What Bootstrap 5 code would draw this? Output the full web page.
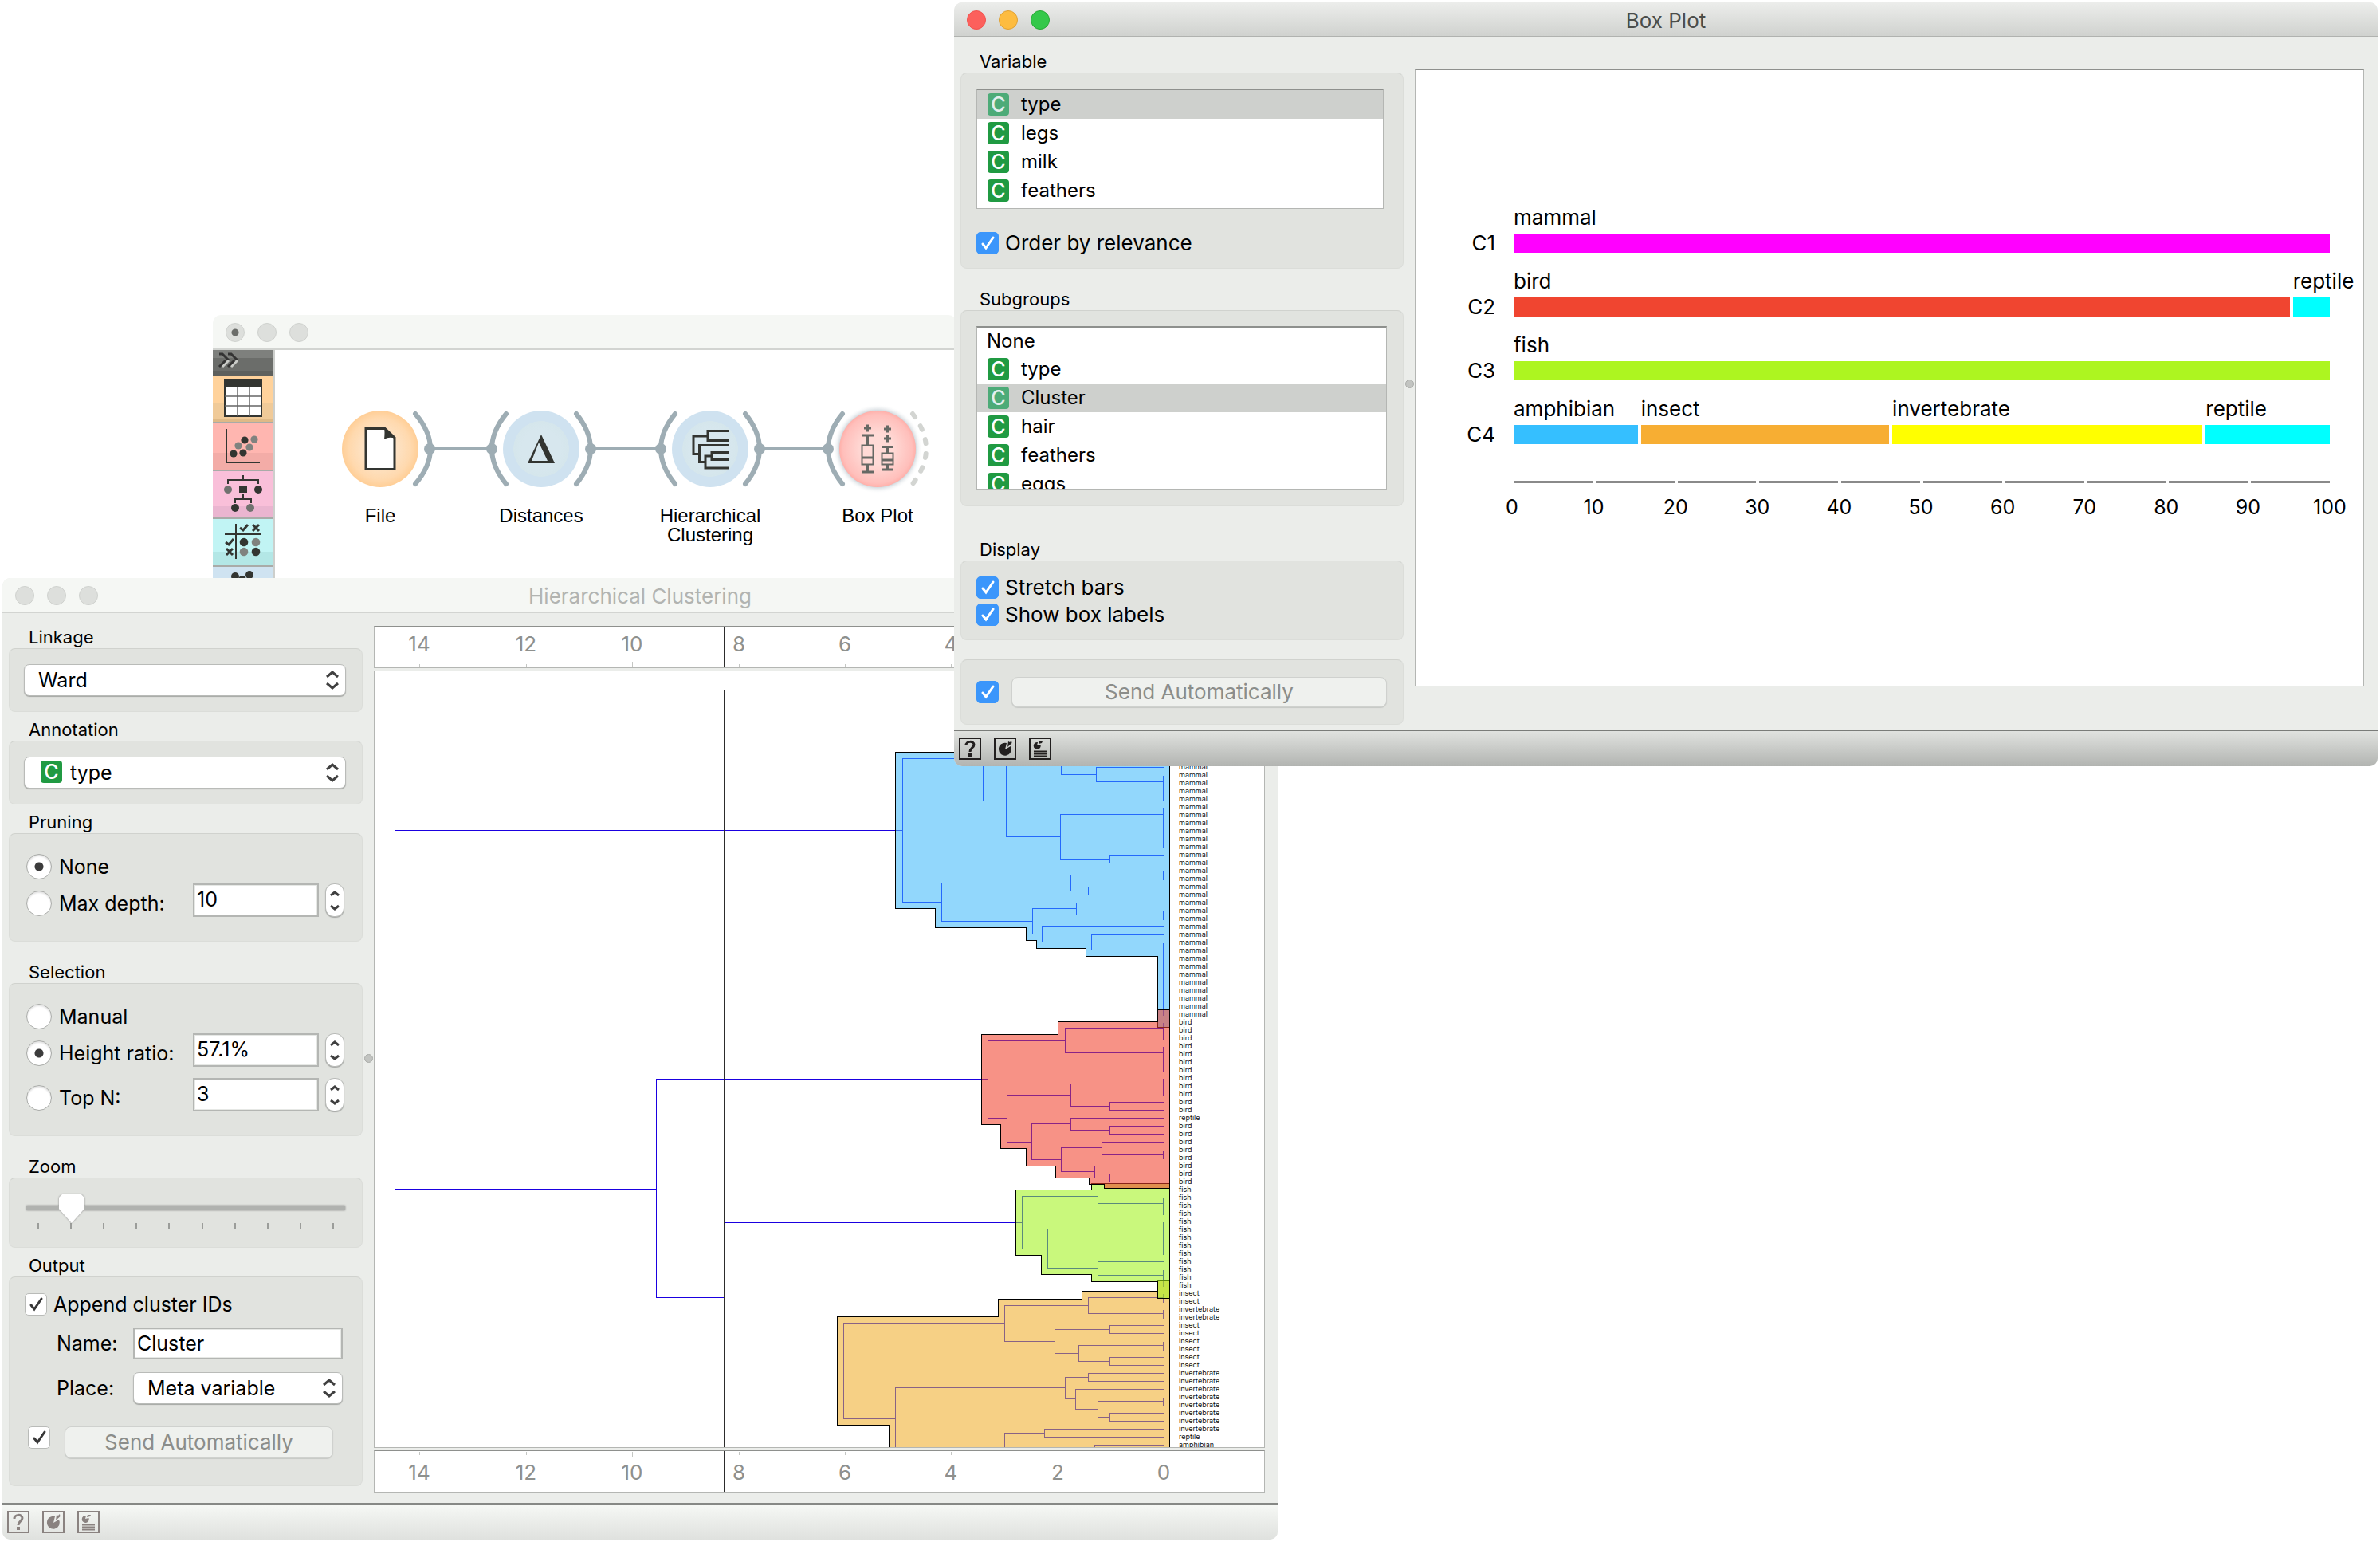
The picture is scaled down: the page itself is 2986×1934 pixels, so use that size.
<!DOCTYPE html>
<html lang="en">
<head>
<meta charset="utf-8">
<meta name="viewport" content="width=device-width, initial-scale=1">
<title>Orange – Box Plot</title>
<link rel="stylesheet" href="https://cdn.jsdelivr.net/npm/bootstrap@5.3.0/dist/css/bootstrap.min.css">
<style>
:root{--ink:#000;--win:#ebedea;--panel:#e1e3df;--edge:#b4b6b3}
body{font-family:Inter,"Noto Sans",sans-serif;font-size:26px;line-height:32px;color:var(--ink);background:#fff}
.desktop{min-height:100vh}
.win{position:absolute;background:var(--win);border-radius:10px;overflow:hidden}
.win-canvas{left:267px;right:1786px;top:395px;background:#fff}
.win-cluster{left:3px;right:1383px;top:725px}
.win-box{left:1197px;right:3px;top:3px}
.titlebar{height:44px;background:#f5f7f4;border-bottom:2px solid #d2d4d1;color:#b2b4b1;position:relative;padding-top:7px}
.win-box .titlebar{background:linear-gradient(#ecedeb,#d0d2cf);border-color:#b0b2af;color:#4b4d4a}
.lights{position:absolute;left:16px;top:10px;gap:16px}
.light{width:24px;height:24px;border-radius:50%;background:#dddfdc;border:1px solid #cfd1ce}
.light-dot{background:radial-gradient(circle,#6b6d6a 4px,#dddfdc 5px)}
.light-r{background:#fc605c;border-color:#f0524e}.light-y{background:#fdbc40;border-color:#dfa033}.light-g{background:#34c84a;border-color:#27a835}
.side{padding-left:8px}
.side-cluster{width:452px;font-size:25px}.side-box{width:564px;padding-bottom:6px}
.grip{width:14px}
.grip i{width:11px;height:11px;border-radius:50%;background:#c2c4c1;border:1px solid #aaaca9}
.legend-line{font-size:22px;line-height:28px;padding:8px 0 0 25px;margin:0}
.side-box .legend-line{padding-left:24px}
.grp{background:var(--panel);border:1px solid #dbddd9;border-top-color:#d0d2ce;border-radius:8px}
.bottombar{height:46px;border-top:2px solid #868885;background:linear-gradient(#f6f8f5,#dfe1de);padding:8px 6px;gap:16px;color:#8a8280}
.win-box .bottombar{border-color:#7a7c79;background:linear-gradient(#e0e2df,#b2b4b1);color:#221f1f}
.barbtn{width:28px;height:28px;padding:0;border:0;background:none;color:inherit;display:block}
.barbtn svg{display:block}
.pop{height:40px;border:1px solid #b9bbb8;border-radius:7px;background:#fff url("data:image/svg+xml,%3Csvg xmlns='http://www.w3.org/2000/svg' width='16' height='26'%3E%3Cpath d='M1 9 8 3l7 6M1 17l7 6 7-6' fill='none' stroke='%23404040' stroke-width='3'/%3E%3C/svg%3E") no-repeat right 8px center;font-size:25px;line-height:32px;padding:0 30px 0 17px;color:#000;box-shadow:0 1px 1px #a5a7a4;background-size:16px 26px}
.pop-icon{padding-left:57px}
.over-icon{position:absolute;left:21px;top:5px}
.cvar{width:27px;height:28px;border-radius:4px;background:#209a42;color:#fff;font-size:25px;font-weight:500;line-height:28px;text-align:center;flex:none}
.txt{height:42px;border:2px solid #b4b6b3;border-radius:0;background:#fff;box-shadow:inset 0 0 0 1px #e6e8e5;font-size:25px;line-height:32px;padding:0 3px 2px;color:#000}
.txt-num{width:158px}
.txt-name{height:40px;padding-bottom:0}
.steps{width:24px;height:42px;border:1px solid #b9bbb8;border-radius:11px;background:#fff;box-shadow:0 1px 1px #a5a7a4;overflow:hidden}
.steps button{border:0;background:none;padding:0;height:20px;width:22px;display:block;line-height:0}
.rad{appearance:none;width:32px;height:32px;border-radius:50%;border:1px solid #a9aba8;background:#fff;box-shadow:inset 0 2px 2px #e2e2e2;margin:0;flex:none}
.rad:checked{background:radial-gradient(circle,#3c3c3c 5px,#fff 6px)}
.chk{appearance:none;width:28px;height:28px;border:1px solid #b9bbb8;border-radius:5px;margin:0;flex:none;background:#fff url("data:image/svg+xml,%3Csvg xmlns='http://www.w3.org/2000/svg' width='26' height='26'%3E%3Cpath d='M7 14l4 5 9-13' fill='none' stroke='%23383838' stroke-width='3' stroke-linecap='round'/%3E%3C/svg%3E") center no-repeat}
.chk-blue{border-color:#3b96fb;background:#3b96fb url("data:image/svg+xml,%3Csvg xmlns='http://www.w3.org/2000/svg' width='26' height='26'%3E%3Cpath d='M7 14l4 5 9-13' fill='none' stroke='white' stroke-width='3' stroke-linecap='round'/%3E%3C/svg%3E") center no-repeat}
.optrow{height:42px}
.optrow label{gap:9px}
.optgap{margin-top:14px}
.grp-pop{padding:19px 20px 19px 18px}
.grp-opts{padding:20px 22px 30px 21px}
.grp-zoom{padding:20px 21px 22px 21px}
.grp-out{padding:13px 24px 34px 19px}
.zoomer{appearance:none;display:block;width:400px;height:36px;margin:0;background:linear-gradient(#b0b2af,#b0b2af) 0 14px/100% 6px no-repeat}
.zoomer::-webkit-slider-thumb{appearance:none;width:32px;height:36px;background:#fff;clip-path:polygon(0 4px,4px 0,28px 0,32px 4px,32px 18px,16px 36px,0 18px)}
.thumbshade{filter:drop-shadow(0 0 1px #888)}
.ticks{padding:0 14px;width:400px}
.ticks i{width:2px;height:8px;background:#9b9d9a}
.fieldrow{padding-left:40px}
.fieldlab{width:96px}
.sendrow{padding:4px 12px 0 4px}
.sendrow .chk{margin-right:18px}
.pushbtn{height:40px;background:#eff1ee;border:1px solid #cfd1ce;border-radius:8px;font-size:26px;line-height:32px;padding:0;color:#8b8d8a;box-shadow:0 1px 1px #c6c8c5}
.pushbtn:disabled{background:#eff1ee;border-color:#cfd1ce;color:#8b8d8a;opacity:1}
.well{background:#fff;border:1px solid var(--edge);border-top-color:#8e908d;overflow:hidden}
.side-main{padding:16px 16px 13px 0;gap:3px}
.axisbox{height:53px}
.axisbox svg,.treebox svg,.flow svg{display:block}
.axistext{font-size:26px;fill:#8e908d;text-anchor:middle}
.leaf{font-size:9px;fill:#111}
.varlist{margin:0;padding:0;list-style:none;background:#fff;border:1px solid var(--edge);border-top:2px solid #8e908d;overflow:hidden;font-size:24px}
.varlist li{height:36px;padding-left:13px;gap:15px}
.varlist li.picked{background:#ced0cd}
.varlist li.picked .cvar{background:#4dab78;color:#e4efee}
.varlist li.novar{height:34px;padding-left:12px}
.list-a{height:151px;margin-right:4px}.list-b{height:205px}
.grp-list{padding:19px 20px 17px 19px}
.ordline{margin-top:29px;height:28px}
.sub{margin-bottom:32px;padding-bottom:20px}
.dispcheck{height:28px}
.dispcheck+.dispcheck{margin-top:6px}
.grp-send{padding:21px 20px 21px 19px}
.grp-send .pushbtn{height:38px}
.plotwell{margin:40px 17px 54px 0;padding:169px 42px 0 0}
.barrow{height:80px}
.barname{width:123px;padding-right:23px;padding-top:36px;line-height:24px;text-align:right}
.bars{gap:4px}
.seg{min-width:0;white-space:nowrap}
.seg i{display:block;height:24px;margin-top:4px}
.axisrow{margin:26px 0 14px 123px;gap:4px}
.axisrow i{height:3px;background:#8a8a8a;flex:1}
.axisnums{margin:0 -32px 0 89px;font-size:25px}
.axisnums span{width:64px;text-align:center}
.toolcol{width:78px;border-right:2px solid #cdcfcc}
.tool{display:block;height:60px;width:76px;padding:0;border:0;border-bottom:2px solid #a9aba8}
.tool-head{height:32px;border:0;background:linear-gradient(#7e807d 10px,#6b6d6a 10px 26px,#5e605d 26px)}
.t1{background:linear-gradient(#ffd29b 35px,#f0ca98 35px 55px,#dfb986 55px)}
.t2{background:linear-gradient(#ffb6b0 37px,#f3aca7 37px)}
.t3{background:linear-gradient(#f9bfd9 44px,#eab5d0 44px)}
.t4{background:linear-gradient(#c1f4f4 41px,#b3e7e6 41px)}
.t5{background:#cfe3f1}
.flow{height:290px}
.nodename{font-family:"Liberation Sans",Arial,sans-serif;font-size:24px;text-anchor:middle}
</style>
<script src="https://cdn.jsdelivr.net/npm/bootstrap@5.3.0/dist/js/bootstrap.bundle.min.js"></script>
</head>
<body>
<svg width="0" height="0" class="position-absolute" aria-hidden="true">
  <symbol id="ico-help" viewBox="0 0 28 28"><rect x="1" y="1" width="26" height="26" fill="none" stroke="currentColor" stroke-width="2"/><path d="M9 10c0-6 10-6 10-1 0 4-5 4-5 9" fill="none" stroke="currentColor" stroke-width="3"/><rect x="12" y="20" width="4" height="4" fill="currentColor"/></symbol>
  <symbol id="ico-chart" viewBox="0 0 28 28"><rect x="1" y="1" width="26" height="26" fill="none" stroke="currentColor" stroke-width="2"/><path d="M14 15 16 7A8 8 0 1 0 21 11Z" fill="currentColor"/><path d="M17 12 18 5l2 1 2-2 .500 3-1 1Z" fill="currentColor"/></symbol>
  <symbol id="ico-report" viewBox="0 0 28 28"><rect x="1" y="1" width="26" height="26" fill="none" stroke="currentColor" stroke-width="2"/><path d="M10 10 11 6A4.500 4.500 0 1 0 14.500 9Z" fill="currentColor"/><path d="M12 8 13 5l4 0-1 2Z" fill="currentColor"/><path d="M6 17.500H22M6 20.500H22M6 23.500H22" stroke="currentColor" stroke-width="2"/></symbol>
</svg>

<main class="desktop position-relative overflow-hidden">

  <!-- workflow canvas window -->
  <section class="win win-canvas" aria-label="Workflow">
    <header class="titlebar"><div class="lights d-flex"><span class="light light-dot"></span><span class="light"></span><span class="light"></span></div></header>
    <div class="d-flex">
      <nav class="toolcol flex-shrink-0" aria-label="Widgets">
        <button class="tool tool-head" aria-label="Expand"><svg width="76" height="32" class="d-block"><g fill="none" stroke-width="3"><path d="M8 5h4l8 8M19 5h4l8 8" stroke="#333"/><path d="M20 13l-8 8M31 13l-8 8" stroke="#c9cbc8"/><path d="M16 13l-8 8M27 13l-8 8" stroke="#333"/></g></svg></button>
        <button class="tool t1" aria-label="Data"><svg width="76" height="58" class="d-block"><rect x="15" y="5" width="46" height="46" fill="#fff" stroke="#333531" stroke-width="2"/><path d="M14 4h48v10H14z" fill="#333531"/><path d="M31 14v37M46 14v37M15 26h46M15 38h46" stroke="#666" stroke-width="1.500"/></svg></button>
        <button class="tool t2" aria-label="Visualize"><svg width="76" height="58" class="d-block"><path d="M17 7v42h42" fill="none" stroke="#333531" stroke-width="2"/><g fill="#333531"><circle cx="26" cy="38" r="4.600"/><circle cx="38" cy="37" r="4.600"/><circle cx="40" cy="21" r="4.600"/></g><g fill="#80827f"><circle cx="32" cy="28" r="4.600"/><circle cx="46" cy="30" r="4.600"/><circle cx="52" cy="20" r="4.600"/></g></svg></button>
        <button class="tool t3" aria-label="Model"><svg width="76" height="58" class="d-block"><path d="M38 5v7M19 16v-5h38v5M38 29v6M28 40v-5h20v5" fill="none" stroke="#333531" stroke-width="2"/><g fill="#333531"><path d="M33 18h10v9H33z"/><circle cx="57" cy="23" r="5"/><circle cx="28" cy="46" r="5"/></g><g fill="#70726f"><circle cx="19" cy="23" r="5"/><circle cx="47" cy="46" r="5"/></g></svg></button>
        <button class="tool t4" aria-label="Evaluate"><svg width="76" height="58" class="d-block"><path d="M29 6v44M15 19h46" stroke="#333531" stroke-width="2"/><path d="M34 11l4 3 6-7M16 29l4 3 6-7M50 7l8 8m0-8-8 8M17 37l8 8m0-8-8 8" fill="none" stroke="#333531" stroke-width="3"/><g fill="#333531"><circle cx="39" cy="29" r="5.300"/><circle cx="54" cy="41" r="5.300"/></g><g fill="#80827f"><circle cx="54" cy="29" r="5.300"/><circle cx="39" cy="41" r="5.300"/></g></svg></button>
        <button class="tool t5" aria-label="Unsupervised"><svg width="76" height="58" class="d-block" fill="#333531"><circle cx="28" cy="12" r="5"/><circle cx="37" cy="16" r="5"/><circle cx="46" cy="10" r="5"/></svg></button>
      </nav>
      <div class="flow flex-grow-1 overflow-hidden">
        <svg width="855" height="290" viewBox="345 439 855 290">
          <defs>
            <radialGradient id="go"><stop offset=".4" stop-color="#fde3c6"/><stop offset=".8" stop-color="#ffd9ae"/><stop offset="1" stop-color="#ffce96"/></radialGradient>
            <radialGradient id="gb"><stop offset=".5" stop-color="#d7e7ee"/><stop offset=".72" stop-color="#d5e6ec"/><stop offset=".73" stop-color="#cfe2f0"/><stop offset="1" stop-color="#cfe2f0"/></radialGradient>
            <radialGradient id="gr"><stop offset=".4" stop-color="#ffdad6"/><stop offset=".9" stop-color="#ffbfbb"/><stop offset="1" stop-color="#ffb0aa"/></radialGradient>
            <radialGradient id="gs"><stop offset=".8" stop-color="#a9b6bf"/><stop offset="1" stop-color="#fff" stop-opacity="0"/></radialGradient>
          </defs>
          <g fill="none" stroke="#9eadb4" stroke-width="6" stroke-linecap="round">
            <path d="M521 519Q540 541 540 563T521 607M635 519Q617 541 617 563T635 607M723 519Q741 541 741 563T723 607M847 519Q829 541 829 563T847 607M935 519Q953 541 953 563T935 607M1057 519Q1039 541 1039 563T1057 607"/>
            <path d="M540 563H617M741 563H829M953 563H1039" stroke-width="4"/>
            <path d="M1145 519Q1162 541 1162 563T1145 607" stroke="#d3d5d2" stroke-dasharray="5 13"/>
          </g>
          <g fill="#9eadb4"><circle cx="539" cy="563" r="7"/><circle cx="617" cy="563" r="7"/><circle cx="741" cy="563" r="7"/><circle cx="829" cy="563" r="7"/><circle cx="953" cy="563" r="7"/><circle cx="1039" cy="563" r="7"/></g>
          <circle cx="477" cy="563" r="48" fill="url(#go)"/>
          <circle cx="679" cy="563" r="48" fill="url(#gb)"/>
          <circle cx="891" cy="563" r="48" fill="url(#gb)"/>
          <circle cx="1101" cy="563" r="56" fill="url(#gs)"/>
          <circle cx="1101" cy="563" r="48" fill="url(#gr)"/>
          <path d="M459 537.500H483L495 549V588.500H459Z" fill="#fff" stroke="#333531" stroke-width="3"/><path d="M482 537 496 550Q488 547 482 551Q483 542 482 537Z" fill="#333531"/>
          <path fill-rule="evenodd" d="M679 545 696 581H662ZM676 555 667 578H687Z" fill="#333531"/>
          <path d="M914 540.500H888V552.500H914M888 547H870V569.500H877.500M914 558.500H877.500V579.500H885M914 567.500H893V576.500H914M893 572H885V587H914" fill="none" stroke="#333531" stroke-width="3"/>
          <g fill="none" stroke="#666864" stroke-width="3"><path d="M1084 537h9m-4.500-4.500v9M1081 546h15M1088.500 546v12M1081 574h15M1088.500 582v10M1081 592h15M1109 538h9m-4.500-4.500v9M1109 550h9m-4.500-4.500v9M1106 560.500h15M1113.500 560v8M1106 577h15M1113.500 582v7M1106 589h15"/><path d="M1081.500 558.500h14v24h-14zM1106.500 568.500h14v14h-14z" stroke-width="2"/></g>
          <g class="nodename"><text x="477" y="655">File</text><text x="679" y="655">Distances</text><text x="891" y="655">Hierarchical</text><text x="891" y="679">Clustering</text><text x="1101" y="655">Box Plot</text></g>
        </svg>
      </div>
    </div>
  </section>

  <!-- hierarchical clustering window -->
  <section class="win win-cluster" aria-label="Hierarchical Clustering">
    <header class="titlebar text-center"><div class="lights d-flex"><span class="light"></span><span class="light"></span><span class="light"></span></div>Hierarchical Clustering</header>
    <div class="d-flex">
      <form class="side side-cluster flex-shrink-0 pt-2">
        <label class="legend-line d-block" for="linkage">Linkage</label>
        <div class="grp grp-pop"><select id="linkage" class="form-select pop"><option>Ward</option></select></div>
        <label class="legend-line d-block" for="annot">Annotation</label>
        <div class="grp grp-pop"><div class="position-relative"><select id="annot" class="form-select pop pop-icon"><option>type</option></select><span class="cvar over-icon">C</span></div></div>
        <div class="legend-line">Pruning</div>
        <div class="grp grp-opts mb-3">
          <div class="optrow d-flex align-items-center"><label class="d-flex align-items-center"><input class="rad" type="radio" name="prune" checked>None</label></div>
          <div class="optrow d-flex align-items-center justify-content-between">
            <label class="d-flex align-items-center pt-2"><input class="rad" type="radio" name="prune">Max depth:</label>
            <div class="d-flex gap-2"><input class="form-control txt txt-num" value="10" aria-label="Max depth"><div class="steps"><button type="button" aria-label="More"><svg width="22" height="20"><path d="M6 14l5-4 5 4" fill="none" stroke="#404040" stroke-width="3"/></svg></button><button type="button" aria-label="Less"><svg width="22" height="20"><path d="M6 7l5 4 5-4" fill="none" stroke="#404040" stroke-width="3"/></svg></button></div></div>
          </div>
        </div>
        <div class="legend-line">Selection</div>
        <div class="grp grp-opts mb-3">
          <div class="optrow d-flex align-items-center"><label class="d-flex align-items-center"><input class="rad" type="radio" name="sel">Manual</label></div>
          <div class="optrow d-flex align-items-center justify-content-between">
            <label class="d-flex align-items-center pt-2"><input class="rad" type="radio" name="sel" checked>Height ratio:</label>
            <div class="d-flex gap-2"><input class="form-control txt txt-num" value="57.1%" aria-label="Height ratio"><div class="steps"><button type="button" aria-label="More"><svg width="22" height="20"><path d="M6 14l5-4 5 4" fill="none" stroke="#404040" stroke-width="3"/></svg></button><button type="button" aria-label="Less"><svg width="22" height="20"><path d="M6 7l5 4 5-4" fill="none" stroke="#404040" stroke-width="3"/></svg></button></div></div>
          </div>
          <div class="optrow optgap d-flex align-items-center justify-content-between">
            <label class="d-flex align-items-center pt-2"><input class="rad" type="radio" name="sel">Top N:</label>
            <div class="d-flex gap-2"><input class="form-control txt txt-num" value="3" aria-label="Top N"><div class="steps"><button type="button" aria-label="More"><svg width="22" height="20"><path d="M6 14l5-4 5 4" fill="none" stroke="#404040" stroke-width="3"/></svg></button><button type="button" aria-label="Less"><svg width="22" height="20"><path d="M6 7l5 4 5-4" fill="none" stroke="#404040" stroke-width="3"/></svg></button></div></div>
          </div>
        </div>
        <label class="legend-line d-block" for="zoom">Zoom</label>
        <div class="grp grp-zoom">
          <div class="thumbshade"><input id="zoom" class="zoomer" type="range" min="0" max="9" value="1"></div>
          <div class="ticks d-flex justify-content-between"><i></i><i></i><i></i><i></i><i></i><i></i><i></i><i></i><i></i><i></i></div>
        </div>
        <div class="legend-line">Output</div>
        <div class="grp grp-out">
          <label class="d-flex align-items-center optrow gap-2"><input class="chk" type="checkbox" checked>Append cluster IDs</label>
          <div class="fieldrow d-flex align-items-center mt-2"><label class="fieldlab flex-shrink-0" for="cname">Name:</label><input id="cname" class="form-control txt txt-name" value="Cluster"></div>
          <div class="fieldrow d-flex align-items-center mt-3"><label class="fieldlab flex-shrink-0" for="cplace">Place:</label><select id="cplace" class="form-select pop"><option>Meta variable</option></select></div>
          <div class="sendrow d-flex mt-4"><input class="chk" type="checkbox" checked aria-label="Send automatically"><button type="button" class="btn pushbtn flex-grow-1" disabled>Send Automatically</button></div>
        </div>
      </form>
      <div class="grip d-flex align-items-center justify-content-center flex-shrink-0"><i></i></div>
      <div class="side-main flex-grow-1 d-flex flex-column overflow-hidden">
        <div class="well axisbox"><svg width="1115" height="52" viewBox="470 786 1115 52"><g class="axistext"><text x="526" y="817">14</text><text x="660" y="817">12</text><text x="793" y="817">10</text><text x="927" y="817">8</text><text x="1060" y="817">6</text><text x="1193" y="817">4</text><text x="1327" y="817">2</text><text x="1460" y="817">0</text></g><path d="M526.500 833v4M660.500 833v4M793.500 830v7M927.500 833v4M1060.500 833v4M1193.500 833v4" stroke="#c4c6c3"/><path d="M909 787v51" stroke="#2c2c2c" stroke-width="2"/></svg></div>
        <div class="well treebox flex-grow-1"><svg id="tree" width="1115" height="973" viewBox="470 842 1115 973">
          <g fill="none" stroke="#0000ff" shape-rendering="crispEdges" transform="translate(.5 .5)">
            <path stroke="#1a00e0" d="M1132 1041H495V1491H823M1239 1353H823V1627H909M909 1533H1282M909 1719H1058"/>
            <path d="M1233 951H1132V1131H1181M1233 898V1004H1262M1262 915V1049H1330M1459 1021H1330V1077H1392M1459 1012V1063M1459 1072H1392V1082H1459M1331 940V971H1375M1459 962H1375V980H1459M1459 972V1003M1343 1107H1181V1155H1295M1459 1097H1343V1117H1365M1459 1092V1103M1459 1112H1365V1122H1459M1350 1139H1295V1171H1307M1459 1132H1350V1147H1459M1459 1142V1153M1459 1162H1307V1181H1369M1459 1172H1369V1191H1459M1459 1182V1273"/>
            <path d="M1336 1305H1239V1402H1263M1459 1289H1336V1320H1459M1459 1282V1303M1459 1312V1343M1343 1373H1263V1432H1294M1459 1359H1343V1387H1392M1459 1352V1373M1459 1382H1392V1392H1459M1343 1409H1294V1454H1331M1459 1402H1343V1417H1392M1459 1412H1392V1422H1459M1382 1439H1331V1469H1373M1459 1432H1382V1447H1459M1459 1442V1453M1459 1462H1373V1477H1392M1459 1472H1392V1482H1459"/>
            <path d="M1377 1500H1282V1566H1314M1459 1492H1377V1509H1459M1459 1502V1523M1459 1541H1314V1590H1377M1459 1532V1573M1459 1582H1377V1599H1459M1459 1592V1613"/>
            <path d="M1260 1659H1058V1779H1123M1365 1637H1260V1682H1323M1459 1627H1365V1647H1459M1459 1622V1633M1459 1642V1653M1392 1667H1323V1697H1353M1459 1662H1392V1672H1459M1459 1687H1353V1707H1392M1459 1682V1693M1459 1702H1392V1712H1459M1336 1740H1123V1816M1365 1727H1336V1754H1349M1459 1722H1365V1732H1459M1459 1742H1349V1767H1377M1459 1757H1377V1777H1392M1459 1752V1763M1459 1772H1392V1782H1459M1310 1797H1260V1816M1459 1792H1310V1802H1459M1459 1812H1373V1816"/>
          </g>
          <g fill-opacity=".57" stroke="#000" shape-rendering="crispEdges" transform="translate(.5 .5)">
            <path fill="#3fb9fa" d="M1123 943H1467V1288H1452V1199H1362V1189H1300V1179H1287V1163H1173V1139H1123Z"/>
            <path fill="#f0ac28" d="M1452 1606H1467V1830H1115V1787H1050V1651H1252V1629H1357V1619H1452Z"/>
            <path fill="#a0f218" d="M1369 1484H1467V1628H1452V1607H1369V1598H1306V1574H1274V1492H1369Z"/>
            <path fill="#f1402a" d="M1467 1266V1490H1385V1485H1366V1477H1324V1462H1287V1440H1255V1410H1231V1297H1327V1281H1452V1266Z"/>
          </g>
          <path d="M909 866V1816" stroke="#2c2c2c" stroke-width="2"/>
          <g id="leaves" class="leaf"></g>
        </svg></div>
        <div class="well axisbox"><svg width="1115" height="52" viewBox="470 1820 1115 52"><g class="axistext"><text x="526" y="1856">14</text><text x="660" y="1856">12</text><text x="793" y="1856">10</text><text x="927" y="1856">8</text><text x="1060" y="1856">6</text><text x="1193" y="1856">4</text><text x="1327" y="1856">2</text><text x="1460" y="1856">0</text></g><path d="M526.500 1821v4M660.500 1821v4M793.500 1821v6M927.500 1821v4M1060.500 1821v4M1193.500 1821v4M1327.500 1821v4" stroke="#c4c6c3"/><path d="M1460.500 1821v11" stroke="#8e908d"/><path d="M909 1820v52" stroke="#2c2c2c" stroke-width="2"/></svg></div>
      </div>
    </div>
    <footer class="bottombar d-flex"><button class="barbtn" aria-label="Help"><svg width="28" height="28"><use href="#ico-help"/></svg></button><button class="barbtn" aria-label="Save image"><svg width="28" height="28"><use href="#ico-chart"/></svg></button><button class="barbtn" aria-label="Report"><svg width="28" height="28"><use href="#ico-report"/></svg></button></footer>
  </section>

  <!-- box plot window -->
  <section class="win win-box" aria-label="Box Plot">
    <header class="titlebar text-center"><div class="lights d-flex"><span class="light light-r"></span><span class="light light-y"></span><span class="light light-g"></span></div>Box Plot</header>
    <div class="d-flex">
      <form class="side side-box flex-shrink-0 pt-2">
        <div class="legend-line">Variable</div>
        <div class="grp grp-list mb-3">
          <ul class="varlist list-a">
            <li class="d-flex align-items-center picked"><span class="cvar">C</span>type</li>
            <li class="d-flex align-items-center"><span class="cvar">C</span>legs</li>
            <li class="d-flex align-items-center"><span class="cvar">C</span>milk</li>
            <li class="d-flex align-items-center"><span class="cvar">C</span>feathers</li>
          </ul>
          <label class="d-flex align-items-center gap-2 ordline"><input class="chk chk-blue" type="checkbox" checked>Order by relevance</label>
        </div>
        <div class="legend-line">Subgroups</div>
        <div class="grp grp-list sub">
          <ul class="varlist list-b">
            <li class="d-flex align-items-center novar">None</li>
            <li class="d-flex align-items-center"><span class="cvar">C</span>type</li>
            <li class="d-flex align-items-center picked"><span class="cvar">C</span>Cluster</li>
            <li class="d-flex align-items-center"><span class="cvar">C</span>hair</li>
            <li class="d-flex align-items-center"><span class="cvar">C</span>feathers</li>
            <li class="d-flex align-items-center"><span class="cvar">C</span>eggs</li>
          </ul>
        </div>
        <div class="legend-line">Display</div>
        <div class="grp grp-list mb-4">
          <label class="d-flex align-items-center gap-2 dispcheck"><input class="chk chk-blue" type="checkbox" checked>Stretch bars</label>
          <label class="d-flex align-items-center gap-2 dispcheck"><input class="chk chk-blue" type="checkbox" checked>Show box labels</label>
        </div>
        <div class="grp grp-send d-flex align-items-center gap-3"><input class="chk chk-blue" type="checkbox" checked aria-label="Send automatically"><button type="button" class="btn pushbtn flex-grow-1" disabled>Send Automatically</button></div>
      </form>
      <div class="grip d-flex align-items-center justify-content-center flex-shrink-0"><i></i></div>
      <div class="well plotwell flex-grow-1">
        <div class="barrow d-flex"><div class="barname">C1</div><div class="bars d-flex flex-grow-1"><div class="seg" style="flex:1">mammal<i style="background:#f0f"></i></div></div></div>
        <div class="barrow d-flex"><div class="barname">C2</div><div class="bars d-flex flex-grow-1"><div class="seg" style="flex:21">bird<i style="background:#f04530"></i></div><div class="seg" style="flex:1">reptile<i style="background:#0ff"></i></div></div></div>
        <div class="barrow d-flex"><div class="barname">C3</div><div class="bars d-flex flex-grow-1"><div class="seg" style="flex:1">fish<i style="background:#adf520"></i></div></div></div>
        <div class="barrow d-flex"><div class="barname">C4</div><div class="bars d-flex flex-grow-1"><div class="seg" style="flex:2">amphibian<i style="background:#35bfff"></i></div><div class="seg" style="flex:4">insect<i style="background:#f7ae33"></i></div><div class="seg" style="flex:5">invertebrate<i style="background:#ff0"></i></div><div class="seg" style="flex:2">reptile<i style="background:#0ff"></i></div></div></div>
        <div class="axisrow d-flex"><i></i><i></i><i></i><i></i><i></i><i></i><i></i><i></i><i></i><i></i></div>
        <div class="axisnums d-flex justify-content-between"><span>0</span><span>10</span><span>20</span><span>30</span><span>40</span><span>50</span><span>60</span><span>70</span><span>80</span><span>90</span><span>100</span></div>
      </div>
    </div>
    <footer class="bottombar d-flex"><button class="barbtn" aria-label="Help"><svg width="28" height="28"><use href="#ico-help"/></svg></button><button class="barbtn" aria-label="Save image"><svg width="28" height="28"><use href="#ico-chart"/></svg></button><button class="barbtn" aria-label="Report"><svg width="28" height="28"><use href="#ico-report"/></svg></button></footer>
  </section>
</main>
<script>
// leaf labels, one every 10 units, as runs of [class, count]
const runs=[["mammal",32],["bird",12],["reptile",1],["bird",8],["fish",13],["insect",2],["invertebrate",2],["insect",6],["invertebrate",8],["reptile",1],["amphibian",1]];
let y=965;
const g=document.getElementById("leaves");
for(const [name,n] of runs)for(let i=0;i<n;i++,y+=10){
  const t=document.createElementNS("http://www.w3.org/2000/svg","text");
  t.setAttribute("x",1479);t.setAttribute("y",y);t.textContent=name;g.appendChild(t);
}
</script>
</body>
</html>
